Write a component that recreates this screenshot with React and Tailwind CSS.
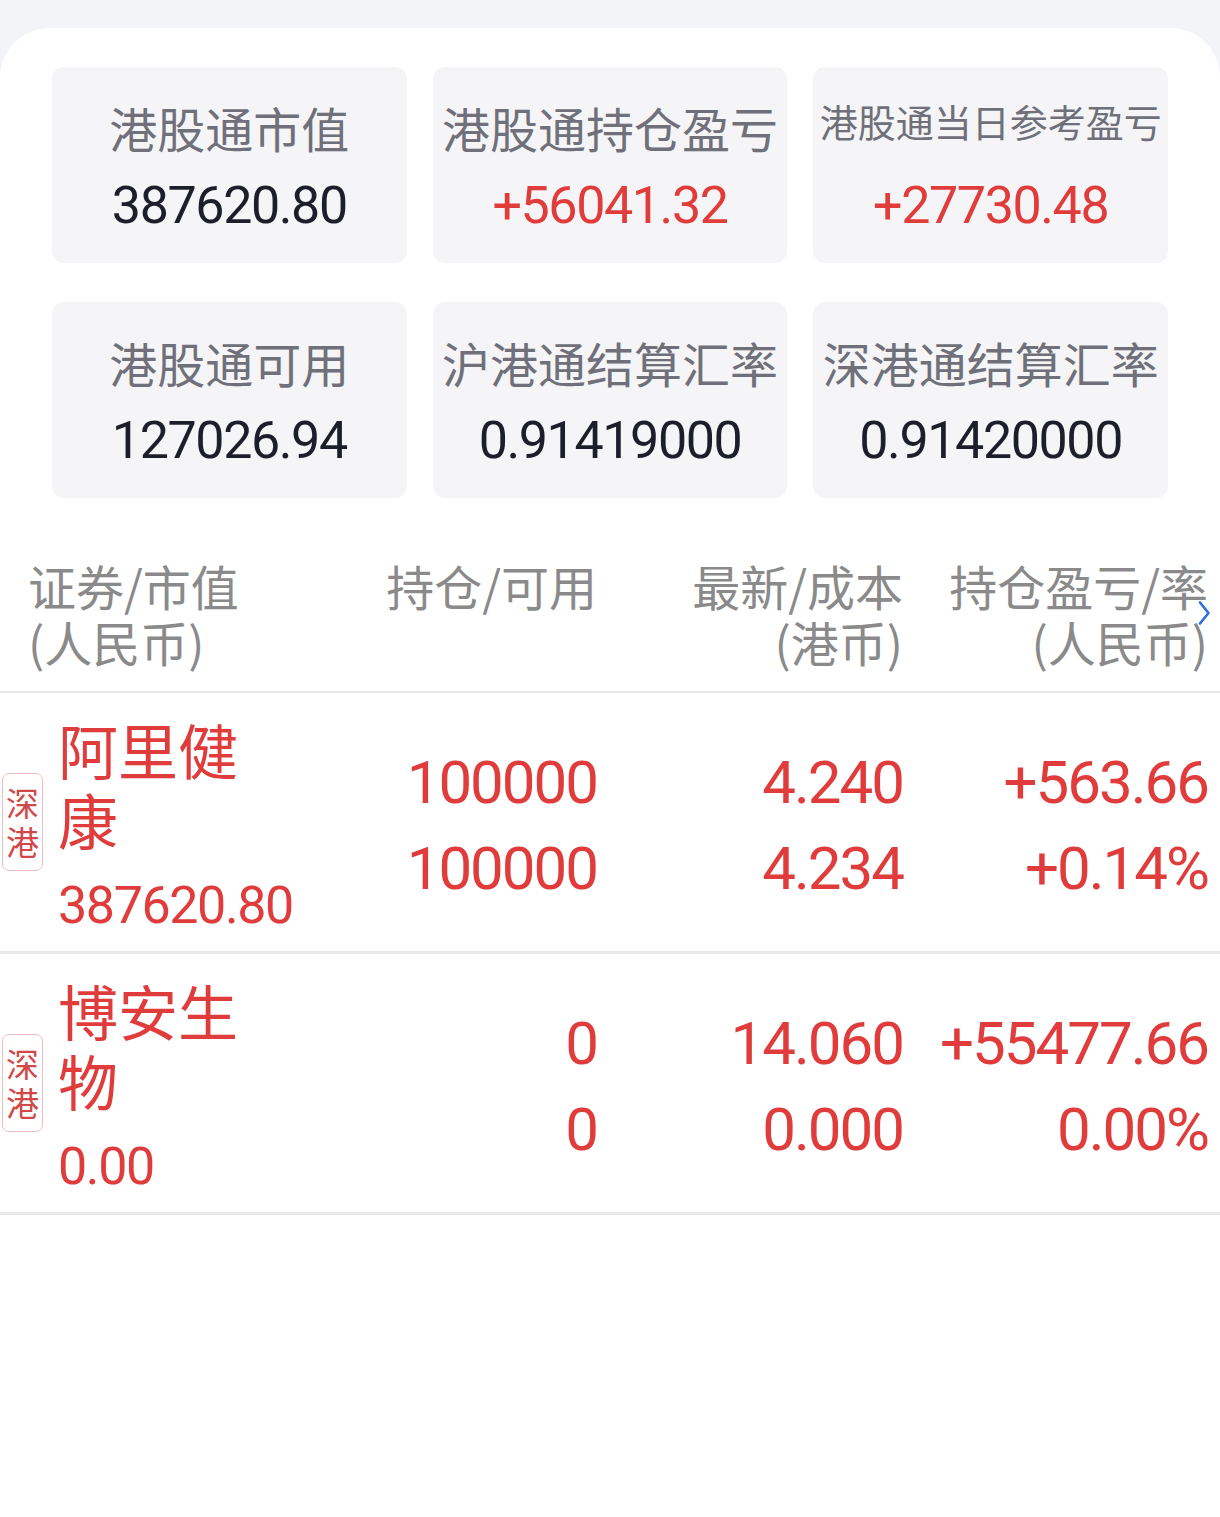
import React from "react";

const CJK = { fontFamily: '"Noto Sans CJK SC", "Noto Sans", sans-serif' };
const NUM = { fontFamily: 'Roboto, "Noto Sans", sans-serif' };

function Tile({ label, value, red, small }) {
  return (
    <div className="h-[196px] rounded-[12px] bg-[#f5f5f7] flex flex-col items-center">
      {small ? (
        <div className="mt-[24px] leading-[60px] text-[38px] text-[#6f7079] whitespace-nowrap" style={CJK}>
          {label}
        </div>
      ) : (
        <div className="mt-[30px] leading-[60px] text-[48px] text-[#6f7079] whitespace-nowrap" style={CJK}>
          {label}
        </div>
      )}
      <div
        className={
          (small ? "mt-[25px] " : "mt-[19px] ") +
          "leading-[60px] text-[52px] tracking-[-1.4px] whitespace-nowrap " +
          (red ? "text-[#e03c3c]" : "text-[#1c1e2a]")
        }
        style={NUM}
      >
        {value}
      </div>
    </div>
  );
}

function Badge() {
  return (
    <div
      className="ml-[2px] w-[41px] h-[98px] shrink-0 rounded-[7px] border-[1.5px] border-[#f0bcbc] flex flex-col items-center justify-center text-[33px] leading-[39px] text-[#d04848]"
      style={CJK}
    >
      <span>深</span>
      <span>港</span>
    </div>
  );
}

function Row({ name, mv, pos, avail, last, cost, pl, rate }) {
  return (
    <div className="grid grid-cols-[300px_297px_306px_305px] h-[261px] border-b-[3px] border-[#e8e8e8] items-center">
      <div className="flex items-center">
        <Badge />
        <div className="ml-[15px] mt-[10px] w-[200px]">
          <div className="text-[60px] leading-[70px] text-[#e03c3c]" style={CJK}>
            {name}
          </div>
          <div className="mt-[17px] text-[52px] leading-[70px] tracking-[-1.4px] text-[#e03c3c]" style={NUM}>
            {mv}
          </div>
        </div>
      </div>
      <div className="mt-[8px] text-right text-[60px] leading-[86px] tracking-[-2px] text-[#e03c3c]" style={NUM}>
        <div>{pos}</div>
        <div>{avail}</div>
      </div>
      <div className="mt-[8px] text-right text-[60px] leading-[86px] tracking-[-2px] text-[#e03c3c]" style={NUM}>
        <div>{last}</div>
        <div>{cost}</div>
      </div>
      <div className="mt-[8px] text-right text-[60px] leading-[86px] tracking-[-2px] text-[#e03c3c] whitespace-nowrap" style={NUM}>
        <div>{pl}</div>
        <div>{rate}</div>
      </div>
    </div>
  );
}

export default function App() {
  return (
    <div className="min-h-[1517px] bg-[#f3f4f8] pt-[28px] flex flex-col">
      <div className="flex-1 bg-white rounded-t-[50px]">
        <div className="px-[52px] pt-[39px] grid grid-cols-3 gap-x-[26px] gap-y-[39px]">
          <Tile label="港股通市值" value="387620.80" />
          <Tile label="港股通持仓盈亏" value="+56041.32" red />
          <Tile label="港股通当日参考盈亏" value="+27730.48" red small />
          <Tile label="港股通可用" value="127026.94" />
          <Tile label="沪港通结算汇率" value="0.91419000" />
          <Tile label="深港通结算汇率" value="0.91420000" />
        </div>

        <div
          className="mt-[59px] grid grid-cols-[300px_297px_306px_305px] pb-[22px] border-b-[2px] border-[#e8e8e8] text-[48px] leading-[56px] text-[#8a8a8a]"
          style={CJK}
        >
          <div className="pl-[28px]">
            <div>证券/市值</div>
            <div>(人民币)</div>
          </div>
          <div className="text-right">
            <div>持仓/可用</div>
          </div>
          <div className="text-right">
            <div>最新/成本</div>
            <div>(港币)</div>
          </div>
          <div className="relative text-right whitespace-nowrap">
            <div>持仓盈亏/率</div>
            <div>(人民币)</div>
            <svg
              className="absolute right-[-3px] top-[43px]"
              width="14"
              height="26"
              viewBox="0 0 14 26"
              fill="none"
            >
              <path d="M3 2.5 L11.5 13 L3 23.5" stroke="#2f6bdb" strokeWidth="2.6" strokeLinecap="round" strokeLinejoin="round" />
            </svg>
          </div>
        </div>

        <Row name="阿里健康" mv="387620.80" pos="100000" avail="100000" last="4.240" cost="4.234" pl="+563.66" rate="+0.14%" />
        <Row name="博安生物" mv="0.00" pos="0" avail="0" last="14.060" cost="0.000" pl="+55477.66" rate="0.00%" />
      </div>
    </div>
  );
}
